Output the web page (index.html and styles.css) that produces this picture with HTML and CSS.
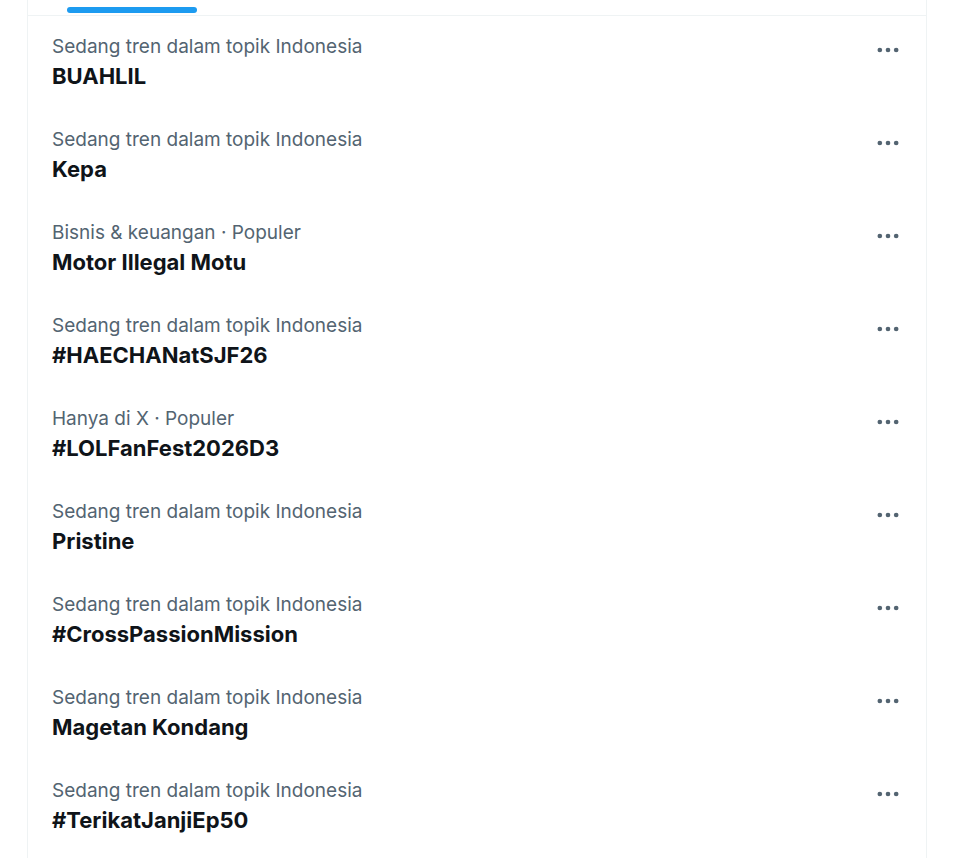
FILE: index.html
```html
<!DOCTYPE html>
<html>
<head>
<meta charset="utf-8">
<link rel="stylesheet" href="styles.css">
</head>
<body>
<main class="column">
  <div class="tabs">
    <div class="tab-indicator"></div>
  </div>
  <section class="trends">
    <div class="trend">
      <div class="trend-text">
        <div class="meta">Sedang tren dalam topik Indonesia</div>
        <div class="title">BUAHLIL</div>
      </div>
      <div class="more"><svg viewBox="0 0 24 24" width="28" height="28"><g fill="#536471"><circle cx="5" cy="12" r="2"/><circle cx="12" cy="12" r="2"/><circle cx="19" cy="12" r="2"/></g></svg></div>
    </div>
    <div class="trend">
      <div class="trend-text">
        <div class="meta">Sedang tren dalam topik Indonesia</div>
        <div class="title">Kepa</div>
      </div>
      <div class="more"><svg viewBox="0 0 24 24" width="28" height="28"><g fill="#536471"><circle cx="5" cy="12" r="2"/><circle cx="12" cy="12" r="2"/><circle cx="19" cy="12" r="2"/></g></svg></div>
    </div>
    <div class="trend">
      <div class="trend-text">
        <div class="meta">Bisnis &amp; keuangan · Populer</div>
        <div class="title">Motor Illegal Motu</div>
      </div>
      <div class="more"><svg viewBox="0 0 24 24" width="28" height="28"><g fill="#536471"><circle cx="5" cy="12" r="2"/><circle cx="12" cy="12" r="2"/><circle cx="19" cy="12" r="2"/></g></svg></div>
    </div>
    <div class="trend">
      <div class="trend-text">
        <div class="meta">Sedang tren dalam topik Indonesia</div>
        <div class="title">#HAECHANatSJF26</div>
      </div>
      <div class="more"><svg viewBox="0 0 24 24" width="28" height="28"><g fill="#536471"><circle cx="5" cy="12" r="2"/><circle cx="12" cy="12" r="2"/><circle cx="19" cy="12" r="2"/></g></svg></div>
    </div>
    <div class="trend">
      <div class="trend-text">
        <div class="meta">Hanya di X · Populer</div>
        <div class="title">#LOLFanFest2026D3</div>
      </div>
      <div class="more"><svg viewBox="0 0 24 24" width="28" height="28"><g fill="#536471"><circle cx="5" cy="12" r="2"/><circle cx="12" cy="12" r="2"/><circle cx="19" cy="12" r="2"/></g></svg></div>
    </div>
    <div class="trend">
      <div class="trend-text">
        <div class="meta">Sedang tren dalam topik Indonesia</div>
        <div class="title">Pristine</div>
      </div>
      <div class="more"><svg viewBox="0 0 24 24" width="28" height="28"><g fill="#536471"><circle cx="5" cy="12" r="2"/><circle cx="12" cy="12" r="2"/><circle cx="19" cy="12" r="2"/></g></svg></div>
    </div>
    <div class="trend">
      <div class="trend-text">
        <div class="meta">Sedang tren dalam topik Indonesia</div>
        <div class="title">#CrossPassionMission</div>
      </div>
      <div class="more"><svg viewBox="0 0 24 24" width="28" height="28"><g fill="#536471"><circle cx="5" cy="12" r="2"/><circle cx="12" cy="12" r="2"/><circle cx="19" cy="12" r="2"/></g></svg></div>
    </div>
    <div class="trend">
      <div class="trend-text">
        <div class="meta">Sedang tren dalam topik Indonesia</div>
        <div class="title">Magetan Kondang</div>
      </div>
      <div class="more"><svg viewBox="0 0 24 24" width="28" height="28"><g fill="#536471"><circle cx="5" cy="12" r="2"/><circle cx="12" cy="12" r="2"/><circle cx="19" cy="12" r="2"/></g></svg></div>
    </div>
    <div class="trend">
      <div class="trend-text">
        <div class="meta">Sedang tren dalam topik Indonesia</div>
        <div class="title">#TerikatJanjiEp50</div>
      </div>
      <div class="more"><svg viewBox="0 0 24 24" width="28" height="28"><g fill="#536471"><circle cx="5" cy="12" r="2"/><circle cx="12" cy="12" r="2"/><circle cx="19" cy="12" r="2"/></g></svg></div>
    </div>
  </section>
</main>
</body>
</html>
```

FILE: styles.css
```css
html, body {
  margin: 0;
  padding: 0;
  background: #ffffff;
}
body {
  font-family: "Inter", "Noto Sans", sans-serif;
  color: #0f1419;
  height: 858px;
  overflow: hidden;
}
.column {
  margin-left: 27px;
  width: 898px;
  border-left: 1px solid #eff3f4;
  border-right: 1px solid #eff3f4;
  min-height: 858px;
}
.tabs {
  height: 15px;
  border-bottom: 1px solid #eff3f4;
  position: relative;
}
.tab-indicator {
  position: absolute;
  left: 39px;
  top: 7px;
  width: 130px;
  height: 6px;
  border-radius: 3px;
  background: #1d9bf0;
}
.trend {
  display: flex;
  justify-content: space-between;
  align-items: flex-start;
  height: 93px;
  box-sizing: border-box;
  padding: 19px 24px 0 24px;
}
.meta {
  font-size: 19px;
  line-height: 24px;
  color: #536471;
}
.title {
  font-size: 22px;
  font-weight: 700;
  line-height: 36px;
  margin-top: -1px;
  color: #0f1419;
}
.more {
  margin-top: 1px;
  width: 28px;
  height: 28px;
}
.more svg {
  display: block;
}
```
